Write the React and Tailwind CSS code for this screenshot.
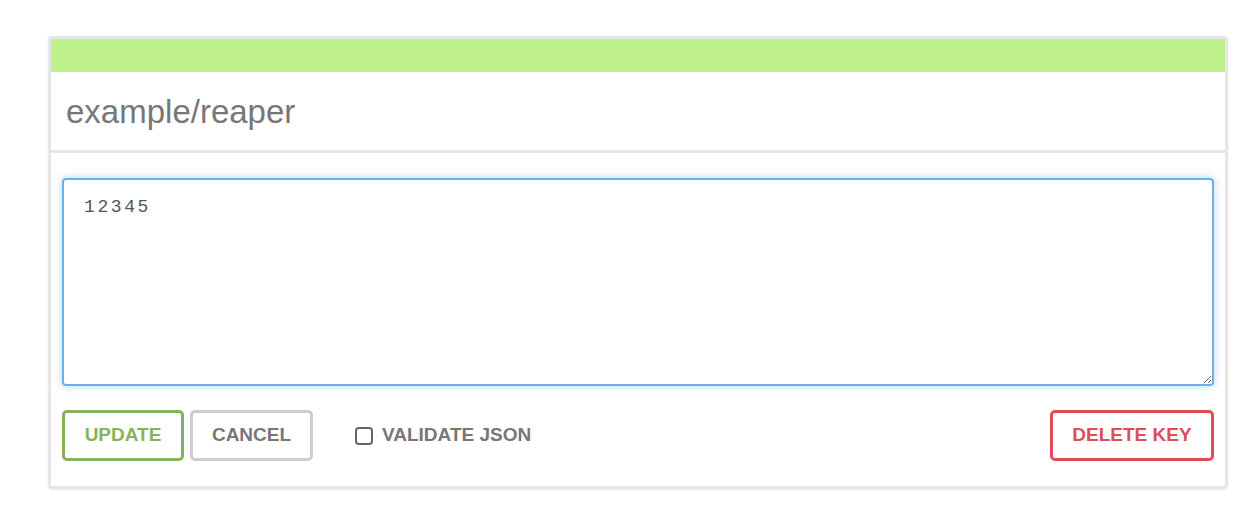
import React, { useState } from 'react';

function App() {
  const [value, setValue] = useState('12345');
  const [validate, setValidate] = useState(false);

  return (
    <div className="min-h-[524px] bg-white pt-[36px] pl-[48px] pr-[24px]" style={{ fontFamily: '"Liberation Sans", Arial, sans-serif' }}>
      <div className="rounded-[4px] border-[3px] border-[#e6e6e6] bg-white shadow-[0_1px_3px_rgba(0,0,0,0.08)]">
        {/* Status bar */}
        <div className="h-[33px] bg-[#bef08c]" />

        {/* Key name */}
        <div className="flex h-[81px] items-center border-b-[3px] border-[#e6e6e6] px-[15px] pt-[2px]">
          <h2 className="text-[33px] font-normal text-[#777777]">example/reaper</h2>
        </div>

        {/* Editor */}
        <div className="px-[11px] pt-[25px] pb-[25px]">
          <textarea
            value={value}
            onChange={(e) => setValue(e.target.value)}
            className="block h-[208px] w-full resize-y rounded-[4px] border-2 border-[#6ab0eb] px-[20px] pt-[14px] text-[18px] tracking-[2.6px] text-[#555555] shadow-[0_0_8px_rgba(102,175,233,0.5)] outline-none"
            style={{ fontFamily: '"Liberation Mono", "Courier New", monospace' }}
          />

          <div className="mt-[24px] flex items-center">
            <button className="h-[51px] w-[122px] rounded-[5px] border-[3px] border-[#86b35a] text-[19px] font-bold text-[#86b35a]">
              UPDATE
            </button>
            <button className="ml-[6px] h-[51px] w-[123px] rounded-[5px] border-[3px] border-[#cccccc] text-[19px] font-bold text-[#777777]">
              CANCEL
            </button>
            <label className="ml-[42px] flex items-center gap-[9px] text-[19px] font-bold text-[#777777]">
              <input
                type="checkbox"
                checked={validate}
                onChange={(e) => setValidate(e.target.checked)}
                className="h-[18px] w-[18px] appearance-none rounded-[4px] border-2 border-[#666666] bg-white"
              />
              VALIDATE JSON
            </label>
            <button className="ml-auto h-[51px] w-[164px] rounded-[5px] border-[3px] border-[#dc4e58] text-[19px] font-bold text-[#dc4e58]">
              DELETE KEY
            </button>
          </div>
        </div>
      </div>
    </div>
  );
}

export default App;
